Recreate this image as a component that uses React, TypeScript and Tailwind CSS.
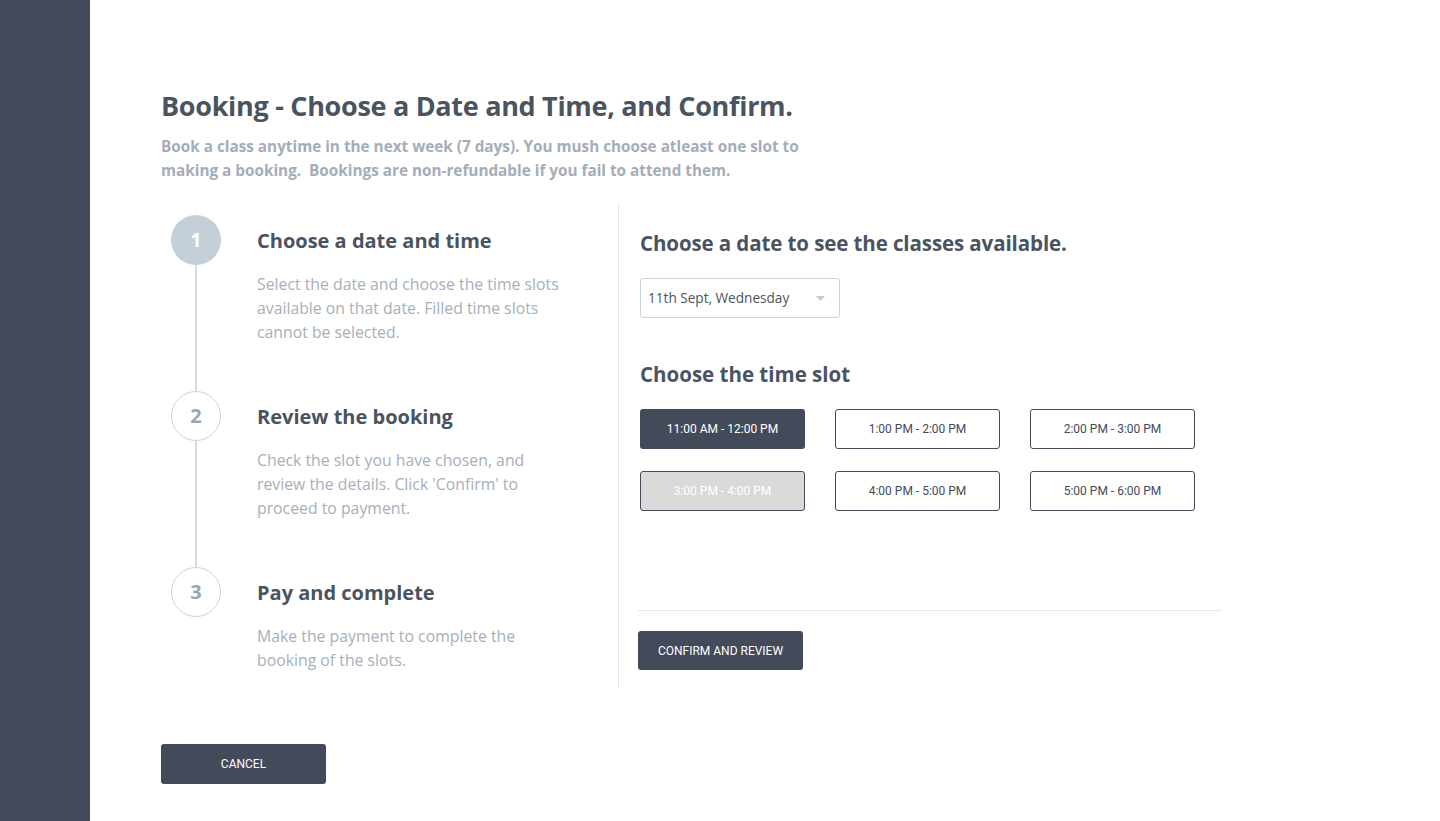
import React from "react";

const steps = [
  {
    n: "1",
    title: "Choose a date and time",
    desc: "Select the date and choose the time slots available on that date. Filled time slots cannot be selected.",
    active: true,
  },
  {
    n: "2",
    title: "Review the booking",
    desc: "Check the slot you have chosen, and review the details. Click 'Confirm' to proceed to payment.",
    active: false,
  },
  {
    n: "3",
    title: "Pay and complete",
    desc: "Make the payment to complete the booking of the slots.",
    active: false,
  },
];

const slots = [
  { t: "11:00 AM - 12:00 PM", s: "selected" },
  { t: "1:00 PM - 2:00 PM", s: "free" },
  { t: "2:00 PM - 3:00 PM", s: "free" },
  { t: "3:00 PM - 4:00 PM", s: "disabled" },
  { t: "4:00 PM - 5:00 PM", s: "free" },
  { t: "5:00 PM - 6:00 PM", s: "free" },
];

export default function App() {
  return (
    <div
      className="flex min-h-[821px] w-full bg-white"
      style={{ fontFamily: "'Open Sans', 'Noto Sans', sans-serif" }}
    >
      <aside className="w-[90px] shrink-0 bg-[#434b5a]" />
      <main className="flex-1 pl-[71px] pt-[88px]">
        <h1 className="text-[27px] font-bold leading-[36px] text-[#4a5461] tracking-[-0.3px]">
          Booking - Choose a Date and Time, and Confirm.
        </h1>
        <p className="mt-[10px] w-[680px] text-[15.3px] font-bold leading-[24px] text-[#a4adb8]">
          Book a class anytime in the next week (7 days). You mush choose atleast one slot to
          <br />
          making a booking.&nbsp; Bookings are non-refundable if you fail to attend them.
        </p>

        <div className="mt-[22px] flex">
          <div className="w-[457px] shrink-0 pt-[11px] pl-[10px]">
            {steps.map((st, i) => (
              <div key={st.n} className="flex">
                <div className="flex w-[50px] shrink-0 flex-col items-center">
                  <div
                    className={
                      st.active
                        ? "flex h-[50px] w-[50px] items-center justify-center rounded-full bg-[#c3d0da] text-[20px] font-bold text-white"
                        : "flex h-[50px] w-[50px] items-center justify-center rounded-full border border-[#c8d4dd] text-[20px] font-bold text-[#9aa6b2]"
                    }
                  >
                    {st.n}
                  </div>
                  {i < steps.length - 1 && <div className="w-[2px] flex-1 bg-[#d3dde5]" />}
                </div>
                <div className={i < steps.length - 1 ? "ml-[36px] pb-[47px]" : "ml-[36px]"}>
                  <div className="mt-[12px] text-[20px] font-bold leading-[28px] text-[#4a5461]">
                    {st.title}
                  </div>
                  <p className="mt-[17px] w-[310px] text-[15.8px] leading-[24px] text-[#a6b0bb]">
                    {st.desc}
                  </p>
                </div>
              </div>
            ))}
          </div>

          <div className="w-px bg-[#e3e8ec] h-[484px]" />

          <div className="pl-[19px] pt-[24px] w-[605px]">
            <div className="pl-[2px]">
              <h2 className="text-[20.5px] font-bold leading-[30px] text-[#4a5461] tracking-[-0.1px]">
                Choose a date to see the classes available.
              </h2>
              <div className="mt-[20px] flex h-[40px] w-[200px] items-center justify-between rounded-[3px] border border-[#c8d2da] pl-[7px] pr-[14px]">
                <span className="text-[13.6px] text-[#4a5461]">11th Sept, Wednesday</span>
                <svg width="9" height="5" viewBox="0 0 9 5">
                  <path d="M0 0 L9 0 L4.5 5 Z" fill="#c3ccd4" />
                </svg>
              </div>
              <h2 className="mt-[41px] text-[20.5px] font-bold leading-[30px] text-[#4a5461]">
                Choose the time slot
              </h2>
              <div className="mt-[20px] grid w-[555px] grid-cols-3 gap-x-[30px] gap-y-[22px]">
                {slots.map((s) => (
                  <div
                    key={s.t}
                    className={
                      s.s === "selected"
                        ? "flex h-[40px] w-[165px] items-center justify-center rounded-[3px] bg-[#434b5a] text-[12px] text-white"
                        : s.s === "disabled"
                        ? "flex h-[40px] w-[165px] items-center justify-center rounded-[3px] border border-[#434b5a] bg-[#d9d9d9] text-[12px] text-white"
                        : "flex h-[40px] w-[165px] items-center justify-center rounded-[3px] border border-[#434b5a] bg-white text-[12px] text-[#434b5a]"
                    }
                    style={{ fontFamily: "Roboto, sans-serif" }}
                  >
                    {s.t}
                  </div>
                ))}
              </div>
            </div>
            <div className="mt-[99px] h-px w-[584px] bg-[#e3e8ec]" />
            <button
              className="mt-[20px] h-[39px] w-[165px] rounded-[3px] bg-[#434b5a] text-[12px] text-white"
              style={{ fontFamily: "Roboto, sans-serif" }}
            >
              CONFIRM AND REVIEW
            </button>
          </div>
        </div>

        <button
          className="mt-[56px] h-[40px] w-[165px] rounded-[3px] bg-[#434b5a] text-[12px] text-white"
          style={{ fontFamily: "Roboto, sans-serif" }}
        >
          CANCEL
        </button>
      </main>
    </div>
  );
}
